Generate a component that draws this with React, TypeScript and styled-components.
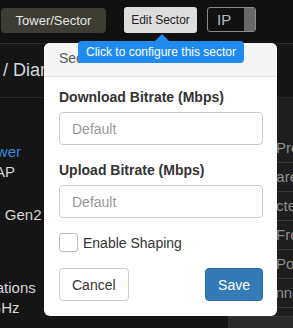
import styled, { createGlobalStyle } from "styled-components";

const GlobalStyle = createGlobalStyle`
    html, body {
        margin: 0;
        padding: 0;
        background: #141414;
        font-family: "Liberation Sans", Arial, sans-serif;
        overflow: hidden;
    }
`;

const sideLines = [
    { text: "Tower", shift: -19, link: true, gap: 44 },
    { text: "AP", shift: -5, gap: 0 },
    { text: "Type: Gen2", shift: -36, gap: 23 },
    { text: "Configurations", shift: -61, gap: 53 },
    { text: "5 GHz", shift: -23, gap: 0 },
];

// shift: how far left of the column the label starts
const tableRows = [
    { text: "Property", shift: 47 },
    { text: "Hardware", shift: 4 },
    { text: "Selected", shift: 17 },
    { text: "Frequency", shift: 47 },
    { text: "Power", shift: 47 },
    { text: "Channel", shift: 19 },
];

function App() {
    return (
        <>
            <GlobalStyle />
            <Page>
                <TopBar>
                    <DarkButton>Tower/Sector</DarkButton>
                    <LightButton>Edit Sector</LightButton>
                    <Toggle>
                        <ToggleLabel>IP</ToggleLabel>
                        <ToggleKnob />
                    </Toggle>
                </TopBar>
                <SubHeader>/ Diameter</SubHeader>
                <Main>
                    <SideColumn>
                        {sideLines.map((line) => (
                            <SideLine
                                key={line.text}
                                $shift={line.shift}
                                $gap={line.gap}
                                $link={line.link}
                            >
                                {line.text}
                            </SideLine>
                        ))}
                    </SideColumn>
                    <InfoTable>
                        {tableRows.map((row) => (
                            <InfoRow key={row.text} $indent={row.shift}>
                                {row.text}
                            </InfoRow>
                        ))}
                        <Spacer />
                        <InfoRow $indent={0} $shade />
                    </InfoTable>
                </Main>

                <Modal>
                    <ModalHeader>Sector Bitrates</ModalHeader>
                    <ModalBody>
                        <Label>Download Bitrate (Mbps)</Label>
                        <Input placeholder="Default" />
                        <Label>Upload Bitrate (Mbps)</Label>
                        <Input placeholder="Default" />
                        <CheckRow>
                            <CheckBox />
                            <CheckText>Enable Shaping</CheckText>
                        </CheckRow>
                        <Footer>
                            <CancelButton>Cancel</CancelButton>
                            <SaveButton>Save</SaveButton>
                        </Footer>
                    </ModalBody>
                </Modal>

                <Tooltip>Click to configure this sector</Tooltip>
            </Page>
        </>
    );
}

const Page = styled.div`
    position: relative;
    width: 293px;
    height: 328px;
    overflow: hidden;
    background: #141414;
`;

const TopBar = styled.div`
    display: flex;
    align-items: flex-start;
    height: 44px;
    padding: 7px 0 0 1px;
    box-sizing: border-box;
    background: #111111;
    border-bottom: 1px solid #2c2c2c;
`;

const DarkButton = styled.div`
    margin-top: 1px;
    width: 105px;
    height: 25px;
    display: flex;
    align-items: center;
    justify-content: center;
    background: #3d3d34;
    color: #e6e6e6;
    font-size: 13px;
    border-radius: 4px;
`;

const LightButton = styled.div`
    margin-left: 18px;
    width: 73px;
    height: 26px;
    display: flex;
    align-items: center;
    justify-content: center;
    background: #dddddd;
    color: #222;
    font-size: 12px;
    border-radius: 3px;
`;

const Toggle = styled.div`
    margin-left: 10px;
    width: 49px;
    height: 25px;
    box-sizing: border-box;
    display: flex;
    border: 1px solid #8a8a8a;
    border-radius: 3px;
    overflow: hidden;
`;

const ToggleLabel = styled.div`
    flex: 1;
    padding-left: 9px;
    line-height: 23px;
    font-size: 15px;
    color: #b4bcc6;
`;

const ToggleKnob = styled.div`
    width: 11px;
    background: #686868;
`;

const SubHeader = styled.div`
    height: 54px;
    padding: 16px 0 0 3px;
    box-sizing: border-box;
    font-size: 18px;
    color: #d2d8de;
    background: #151515;
    border-bottom: 1px solid #2a2a2a;
    white-space: nowrap;
`;

const Main = styled.div`
    display: flex;
    height: 230px;
    background: #151515;
`;

const SideColumn = styled.div`
    flex: 1;
    overflow: hidden;
`;

const SideLine = styled.div<{ $shift: number; $gap: number; $link?: boolean }>`
    margin-left: ${(p) => p.$shift}px;
    margin-top: ${(p) => p.$gap}px;
    font-size: 15px;
    line-height: 20px;
    white-space: nowrap;
    color: ${(p) => (p.$link ? "#3a87d6" : "#d6d6d6")};
`;

const InfoTable = styled.div`
    width: 64px;
    padding-top: 36px;
    background: #1e1e1e;
    border-left: 1px solid #333;
    overflow: hidden;
`;

const InfoRow = styled.div<{ $indent: number; $shade?: boolean }>`
    height: 28px;
    line-height: 28px;
    padding-left: ${(p) => p.$indent}px;
    font-size: 15px;
    color: #8f8f8f;
    white-space: nowrap;
    border-bottom: 1px solid #383838;
    background: ${(p) => (p.$shade ? "#2a2a2a" : "transparent")};
`;

const Spacer = styled.div`
    height: 8px;
    border-bottom: 1px solid #383838;
`;

const Modal = styled.div`
    position: absolute;
    left: 44px;
    top: 43px;
    width: 233px;
    background: #fff;
    border-radius: 6px;
    overflow: hidden;
`;

const ModalHeader = styled.div`
    padding: 5px 15px 8px;
    font-size: 14px;
    line-height: 20px;
    color: #555;
    background: #f5f5f5;
    border-bottom: 1px solid #e5e5e5;
`;

const ModalBody = styled.div`
    display: flex;
    flex-direction: column;
    padding: 10px 14px 15px 15px;
`;

const Label = styled.label`
    font-size: 14px;
    line-height: 20px;
    font-weight: bold;
    color: #333;
    margin-bottom: 5px;
`;

const Input = styled.input`
    height: 33px;
    box-sizing: border-box;
    padding: 6px 12px;
    margin-bottom: 15px;
    border: 1px solid #cccccc;
    border-radius: 4px;
    font-family: "Liberation Sans", Arial, sans-serif;
    font-size: 14px;
    color: #555;
    outline: none;

    &::placeholder {
        color: #999;
    }
`;

const CheckRow = styled.div`
    display: flex;
    align-items: center;
    gap: 5px;
`;

const CheckBox = styled.div`
    width: 19px;
    height: 19px;
    box-sizing: border-box;
    border: 1px solid #bbbbbb;
    border-radius: 3px;
    background: #fff;
`;

const CheckText = styled.span`
    font-size: 14px;
    color: #333;
`;

const Footer = styled.div`
    display: flex;
    justify-content: space-between;
    margin-top: 16px;
`;

const BaseButton = styled.div`
    height: 33px;
    box-sizing: border-box;
    padding: 0 12px;
    display: flex;
    align-items: center;
    font-size: 14px;
    border-radius: 4px;
    border: 1px solid transparent;
`;

const CancelButton = styled(BaseButton)`
    color: #333;
    background: #fff;
    border-color: #cccccc;
`;

const SaveButton = styled(BaseButton)`
    color: #fff;
    background: #337ab7;
    border-color: #2e6da4;
`;

const Tooltip = styled.div`
    position: absolute;
    left: 78px;
    top: 41px;
    width: 166px;
    height: 22px;
    box-sizing: border-box;
    text-align: center;
    line-height: 22px;
    font-size: 12px;
    color: #fff;
    background: #1f8bf0;
    border-radius: 4px;
    white-space: nowrap;

    &::before {
        content: "";
        position: absolute;
        left: 77px;
        top: -7px;
        border-left: 7px solid transparent;
        border-right: 7px solid transparent;
        border-bottom: 7px solid #1f8bf0;
    }
`;

export default App;
